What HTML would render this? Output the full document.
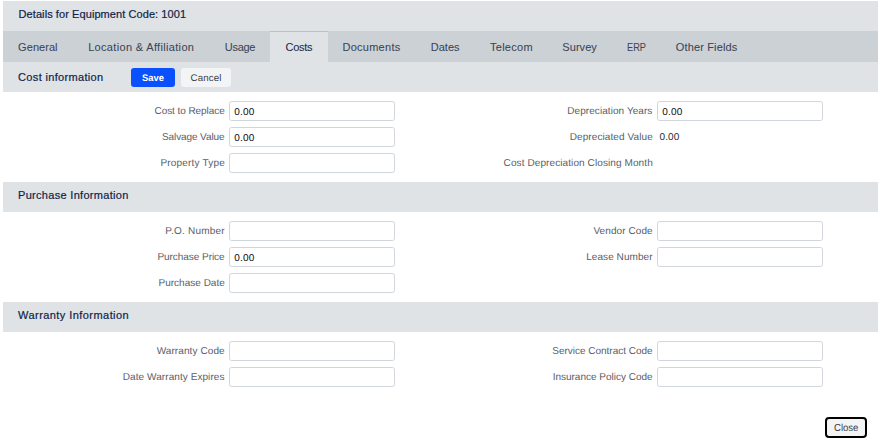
<!DOCTYPE html>
<html lang="en">
<head>
<meta charset="utf-8">
<title>Details for Equipment Code: 1001</title>
<style>
html,body{margin:0;padding:0;background:#fff;}
body{width:883px;height:443px;position:relative;overflow:hidden;font-family:"Liberation Sans",sans-serif;color:#1c2a48;}
.bar{position:absolute;left:3px;width:875px;}
#titlebar{top:1px;height:30px;background:#dfe3e6;}
#tabbar{top:31px;height:31px;background:#ccd1d5;}
.secbar{height:30px;background:#dfe3e6;}
.t{position:absolute;white-space:pre;line-height:14px;height:14px;}
.h{font-size:11px;color:#101e48;-webkit-text-stroke:0.2px #101e48;}
.tab{font-size:11px;color:#3a4557;-webkit-text-stroke:0.06px #3a4557;}
.tab.on{color:#1a2947;-webkit-text-stroke:0.06px #1a2947;}
#active{position:absolute;left:270px;top:31px;width:58px;height:31px;background:#dfe3e6;border-top:1.5px solid #f7c80a;box-sizing:border-box;}
.lbl{font-size:10px;color:#5a5e65;text-rendering:geometricPrecision;}
.val{font-size:10px;color:#0c0c10;text-rendering:geometricPrecision;}
.inp{position:absolute;box-sizing:border-box;width:166px;height:20px;border:1px solid #d0d6db;border-radius:2.5px;background:#fff;}
.i1{left:229px;}
.i2{left:657px;}
.btn{position:absolute;box-sizing:border-box;border-radius:3px;}
.bt{font-size:9.7px;text-rendering:geometricPrecision;}
.save{color:#fff;font-weight:bold;}
.gbt{color:#3b3f46;}
</style>
</head>
<body>
<div id="titlebar" class="bar"></div>
<div id="tabbar" class="bar"></div>
<div id="active"></div>
<div class="bar secbar" style="top:62px"></div>
<div class="bar secbar" style="top:182px"></div>
<div class="bar secbar" style="top:302px"></div>

<div class="btn" style="left:131px;top:68px;width:44px;height:19px;background:#0a50fc;"></div>
<div class="btn" style="left:181px;top:68px;width:50px;height:19px;background:#f3f4f6;"></div>

<div class="inp i1" style="top:101px;"></div>
<div class="inp i1" style="top:127px;"></div>
<div class="inp i1" style="top:153px;"></div>
<div class="inp i2" style="top:101px;"></div>

<div class="inp i1" style="top:221px;"></div>
<div class="inp i1" style="top:247px;"></div>
<div class="inp i1" style="top:273px;"></div>
<div class="inp i2" style="top:221px;"></div>
<div class="inp i2" style="top:247px;"></div>

<div class="inp i1" style="top:341px;"></div>
<div class="inp i1" style="top:367px;"></div>
<div class="inp i2" style="top:341px;"></div>
<div class="inp i2" style="top:367px;"></div>

<div class="btn" style="left:825px;top:417px;width:42px;height:21px;border:2px solid #000;border-radius:4px;background:#f3f4f6;"></div>

<div class="t h" style="left:18.59px;top:7px;letter-spacing:0.077px">Details for Equipment Code: 1001</div>
<div class="t tab" style="left:18.12px;top:40px;letter-spacing:0.051px">General</div>
<div class="t tab" style="left:88.13px;top:40px;letter-spacing:0.332px">Location &amp; Affiliation</div>
<div class="t tab" style="left:224.83px;top:40px;letter-spacing:-0.316px">Usage</div>
<div class="t tab on" style="left:285.59px;top:40px;letter-spacing:-0.295px">Costs</div>
<div class="t tab" style="left:342.46px;top:40px;letter-spacing:0.265px">Documents</div>
<div class="t tab" style="left:430.69px;top:40px;letter-spacing:0.037px">Dates</div>
<div class="t tab" style="left:490.00px;top:40px;letter-spacing:0.268px">Telecom</div>
<div class="t tab" style="left:562.36px;top:40px;letter-spacing:0.038px">Survey</div>
<div class="t tab" style="left:626.55px;top:40px;transform:scale(0.8386,1.0000);transform-origin:0 10px">ERP</div>
<div class="t tab" style="left:675.74px;top:40px;letter-spacing:0.152px">Other Fields</div>
<div class="t h" style="left:18.10px;top:70px;letter-spacing:0.332px">Cost information</div>
<div class="t bt save" style="left:141.60px;top:72px;transform:scale(0.9683,1.0000);transform-origin:0 10px">Save</div>
<div class="t bt gbt" style="left:190.58px;top:72px;letter-spacing:0.132px">Cancel</div>
<div class="t h" style="left:17.99px;top:188px;letter-spacing:0.306px">Purchase Information</div>
<div class="t h" style="left:18.10px;top:308px;letter-spacing:0.436px">Warranty Information</div>
<div class="t bt gbt" style="left:833.51px;top:422px;font-size:10.2px;transform:scale(0.9380,1.0000);transform-origin:0 10px">Close</div>
<div class="t lbl" style="right:658.31px;top:105px;letter-spacing:-0.065px">Cost to Replace</div>
<div class="t lbl" style="right:658.53px;top:131px;letter-spacing:-0.096px">Salvage Value</div>
<div class="t lbl" style="right:658.09px;top:157px;letter-spacing:0.186px">Property Type</div>
<div class="t lbl" style="right:658.15px;top:225px;letter-spacing:0.223px">P.O. Number</div>
<div class="t lbl" style="right:658.40px;top:251px;letter-spacing:-0.043px">Purchase Price</div>
<div class="t lbl" style="right:658.18px;top:277px;letter-spacing:0.016px">Purchase Date</div>
<div class="t lbl" style="right:658.25px;top:345px;letter-spacing:0.096px">Warranty Code</div>
<div class="t lbl" style="right:658.48px;top:371px;letter-spacing:0.072px">Date Warranty Expires</div>
<div class="t lbl" style="right:230.55px;top:105px;letter-spacing:0.070px">Depreciation Years</div>
<div class="t lbl" style="right:230.21px;top:131px;letter-spacing:0.091px">Depreciated Value</div>
<div class="t lbl" style="right:230.18px;top:157px;letter-spacing:0.098px">Cost Depreciation Closing Month</div>
<div class="t lbl" style="right:230.22px;top:225px;letter-spacing:0.090px">Vendor Code</div>
<div class="t lbl" style="right:230.38px;top:251px;letter-spacing:0.072px">Lease Number</div>
<div class="t lbl" style="right:230.46px;top:345px;letter-spacing:-0.016px">Service Contract Code</div>
<div class="t lbl" style="right:230.45px;top:371px;letter-spacing:-0.006px">Insurance Policy Code</div>
<div class="t val" style="left:234.13px;top:106px;letter-spacing:0.240px">0.00</div>
<div class="t val" style="left:234.13px;top:132px;letter-spacing:0.240px">0.00</div>
<div class="t val" style="left:234.13px;top:252px;letter-spacing:0.240px">0.00</div>
<div class="t val" style="left:662.22px;top:106px;letter-spacing:0.186px">0.00</div>
<div class="t val" style="left:659.52px;top:131px;letter-spacing:0.110px;color:#2b2e35">0.00</div>
</body>
</html>
